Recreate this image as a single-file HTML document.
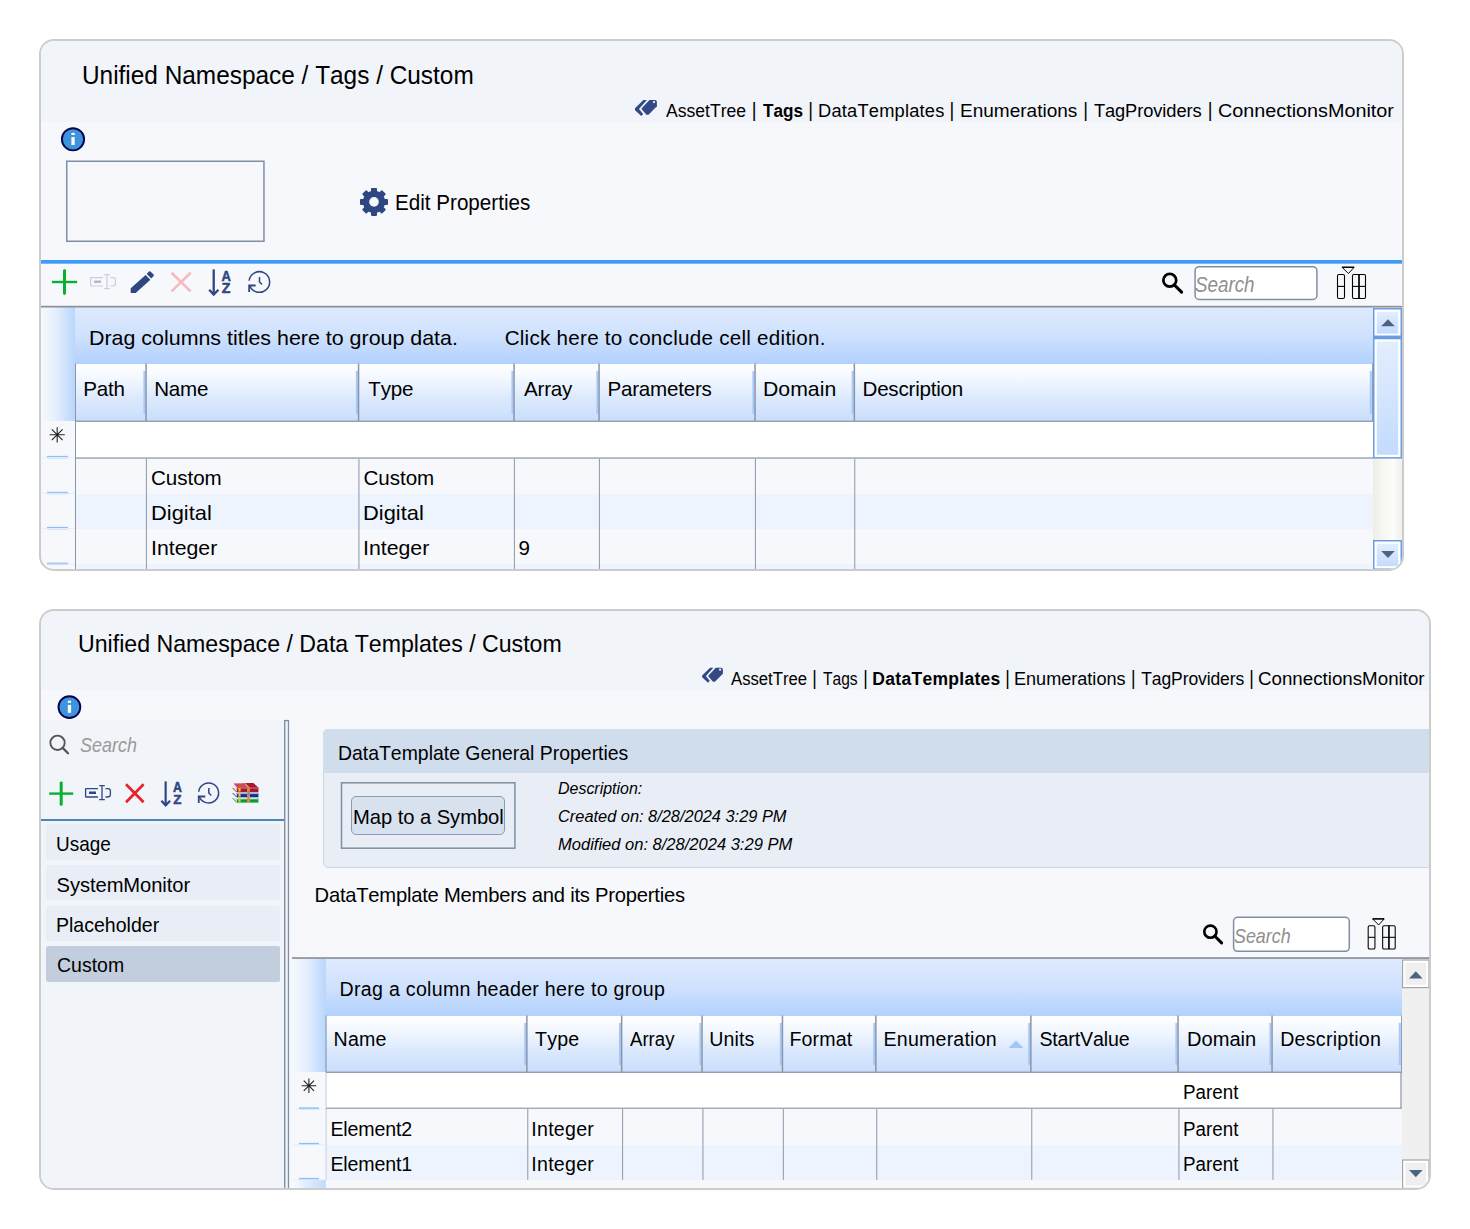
<!DOCTYPE html>
<html lang="en"><head><meta charset="utf-8"><title>Unified Namespace</title>
<style>
html,body{margin:0;padding:0;background:#fff}
body{width:1470px;height:1229px;position:relative;overflow:hidden;font-family:"Liberation Sans",sans-serif;font-kerning:none;color:#000}
.panel{position:absolute;border:2px solid #ccc;border-radius:15px;overflow:hidden;box-sizing:border-box;background:#f7f8fc}
.in{position:absolute;width:1470px;height:1229px}
.in div,.in svg,.t{position:absolute}
.t{white-space:nowrap;line-height:1}
</style></head>
<body>
<section class="panel" style="left:39px;top:39px;width:1365px;height:532px" aria-label="Unified Namespace Tags"><div class="in" style="left:-41px;top:-41px">
<div style="left:41px;top:41px;width:1361px;height:81px;background:#f1f4f9"></div>
<div style="left:41px;top:260px;width:1361px;height:4px;background:linear-gradient(#3f9bf7 0,#3f9bf7 78%,#b9d8fb 100%)"></div>
<div style="left:41px;top:307px;width:34px;height:114px;background:linear-gradient(90deg,#f6f9fe 0,#e4eefd 45%,#b9d6fd 100%)"></div>
<div style="left:75px;top:307px;width:1298px;height:57px;background:linear-gradient(#deeafd 0,#cfe1fd 50%,#b2d1fd 100%)"></div>
<div style="left:75px;top:364px;width:1298px;height:57px;background:linear-gradient(#ffffff 0,#f3f8ff 25%,#dce9fd 60%,#c9defc 100%)"></div>
<div style="left:76px;top:422px;width:1297px;height:36px;background:#fff"></div>
<div style="left:76px;top:459px;width:1297px;height:35px;background:#f7f8fc"></div>
<div style="left:76px;top:494px;width:1297px;height:35px;background:#eef4fd"></div>
<div style="left:76px;top:529px;width:1297px;height:35px;background:#f7f8fc"></div>
<div style="left:76px;top:564px;width:1297px;height:6px;background:#eef4fd"></div>
<div style="left:1373px;top:307px;width:29px;height:263px;background:linear-gradient(90deg,#eeeee8 0,#f7f7f3 35%,#fcfcfa 70%,#f0efe9 100%)"></div>
<svg width="1470" height="1229" viewBox="0 0 1470 1229" style="left:0;top:0">
<defs><linearGradient id="sbg" x1="0" y1="0" x2="0" y2="1"><stop offset="0" stop-color="#e3eefe"/><stop offset="1" stop-color="#c3dbfd"/></linearGradient></defs>
<g transform="translate(630,94) scale(1.0)" fill="#324985"><path d="M13.4 6.1 L16.9 6.1 L9.0 14.9 L13.1 19.9 L11.3 22 L5 16.2 L5 14.3 Z"/><path d="M19.4 6.1 L25.0 6.1 Q26.9 6.1 26.9 8 L26.9 12.3 L18.5 20.8 L16.4 20.8 L11.3 14.8 Z"/><circle cx="24.0" cy="8.1" r="1.15" fill="#f1f4f9"/></g>
<circle cx="73" cy="139.3" r="11.1" fill="#3d93dc" stroke="#05054c" stroke-width="1.9"/><rect x="71.4" y="132.9" width="3.3" height="2.1" fill="#fff"/><rect x="71.4" y="137.10000000000002" width="3.3" height="7.9" fill="#fff"/>
<rect x="66.75" y="161.25" width="197.2" height="80" fill="none" stroke="#7f8fa3" stroke-width="1.5"/>
<g transform="translate(374,201.9)" fill="#2f4781"><rect x="-3.0" y="-14" width="6.0" height="28" rx="0.8" transform="rotate(0)"/><rect x="-3.0" y="-14" width="6.0" height="28" rx="0.8" transform="rotate(45)"/><rect x="-3.0" y="-14" width="6.0" height="28" rx="0.8" transform="rotate(90)"/><rect x="-3.0" y="-14" width="6.0" height="28" rx="0.8" transform="rotate(135)"/><circle r="11.1"/></g><circle cx="374" cy="201.9" r="4.8" fill="#f7f8fc"/>
<path d="M63.0 270 L64.5 269 L66.0 270 L66.0 294 L64.5 295 L63.0 294 Z" fill="#09b030"/><rect x="51.9" y="280.8" width="25.2" height="2.4" fill="#09b030"/>
<g transform="translate(90,274)" fill="none" stroke="#c6cee0" stroke-width="1.2"><path d="M13 3.6 L1.2 3.6 Q0.6 3.6 0.6 4.2 L0.6 11.4 Q0.6 12 1.2 12 L13 12"/><path d="M20.5 3.6 L23 3.6 Q25.4 3.6 25.4 6 L25.4 9.6 Q25.4 12 23 12 L20.5 12"/><path d="M14.2 0.6 L19.8 0.6 M17 0.6 L17 14.6 M14.2 14.6 L19.8 14.6"/><rect x="4" y="6.5" width="7" height="2.5" fill="#aeb9d2" stroke="none"/></g>
<g transform="translate(130.8,270.8)" fill="#2f4781"><path d="M-0.1 22.3 L-0.1 17.4 L14.8 4.2 L19.6 8.9 L4.9 22.3 Z"/><path d="M15.9 3.2 L18.0 0.8 Q18.8 0.0 19.7 0.8 L22.8 3.6 Q23.5 4.3 22.8 5.1 L20.5 7.6 Z"/></g>
<path d="M171.6 272.8 L190.6 291.40000000000003 M190.6 272.8 L171.6 291.40000000000003" stroke="#f5b9bf" stroke-width="2.6" fill="none"/>
<g transform="translate(208.6,269.4) scale(1.0)"><path d="M5.1 0 L5.1 25" stroke="#2f4781" stroke-width="2.3" fill="none"/><path d="M0.6 20.3 L5.1 25.2 L9.8 20.3" stroke="#2f4781" stroke-width="2.3" fill="none" stroke-linejoin="miter"/><text x="12.9" y="11.3" font-family="Liberation Sans,sans-serif" font-weight="700" font-size="14.6" fill="#2f4781" stroke="#2f4781" stroke-width="0.5" textLength="9.4" lengthAdjust="spacingAndGlyphs">A</text><text x="13.2" y="23.9" font-family="Liberation Sans,sans-serif" font-weight="700" font-size="14.2" fill="#2f4781" stroke="#2f4781" stroke-width="0.5">Z</text></g>
<g fill="none" stroke="#2f4781" stroke-width="1.5"><path d="M249.08 280.74 A10.3 10.3 0 1 1 249.56 285.35"/><path d="M255.65 285.50 L249.15 285.50 L249.15 291.90" stroke-width="1.8"/><path d="M259.50 277.10 L259.50 282.00 L262.00 284.50"/></g>
<circle cx="1169.78" cy="280.28" r="6.43" fill="none" stroke="#000" stroke-width="2.7"/><path d="M1174.32 284.82 L1181.60 292.10" stroke="#000" stroke-width="3.1" stroke-linecap="round"/>
<rect x="1195.1" y="266.7" width="121.8" height="32.7" rx="4" fill="#fff" stroke="#7f8fa3" stroke-width="1.5"/>
<g transform="translate(1337,267) scale(1.0)" fill="none" stroke="#000" stroke-width="1.1"><path d="M5.2 0.4 L17 0.4 L11.4 6.6 Z" stroke-width="1"/><path d="M5 0.2 L17.2 0.2" stroke-width="1.3"/><rect x="0.5" y="7.5" width="7" height="24" rx="1.4"/><path d="M0.5 19.4 L7.5 19.4"/><rect x="15.5" y="7.5" width="13" height="24" rx="1.4"/><path d="M15.5 19.4 L28.5 19.4"/><path d="M22 7.5 L22 31.5" stroke-width="1.7"/></g>
<rect x="41" y="305.8" width="1361" height="1.7" fill="#8a9098"/>
<rect x="143.4" y="371" width="2" height="43" fill="#a6c8fa"/><rect x="145.3" y="363.5" width="1.5" height="57.5" fill="#8a96a8"/><rect x="355.9" y="371" width="2" height="43" fill="#a6c8fa"/><rect x="357.8" y="363.5" width="1.5" height="57.5" fill="#8a96a8"/><rect x="511.4" y="371" width="2" height="43" fill="#a6c8fa"/><rect x="513.3" y="363.5" width="1.5" height="57.5" fill="#8a96a8"/><rect x="596.4" y="371" width="2" height="43" fill="#a6c8fa"/><rect x="598.3" y="363.5" width="1.5" height="57.5" fill="#8a96a8"/><rect x="752.4" y="371" width="2" height="43" fill="#a6c8fa"/><rect x="754.3" y="363.5" width="1.5" height="57.5" fill="#8a96a8"/><rect x="851.7" y="371" width="2" height="43" fill="#a6c8fa"/><rect x="853.6" y="363.5" width="1.5" height="57.5" fill="#8a96a8"/><rect x="1369.8" y="371" width="2" height="43" fill="#a6c8fa"/><rect x="1372.0" y="363.5" width="0.9" height="57.5" fill="#8a96a8"/>
<rect x="75" y="363.5" width="1" height="207" fill="#8a96a8"/>
<rect x="75" y="420.6" width="1298" height="1.3" fill="#8a96a8"/>
<rect x="75" y="457.4" width="1298" height="1.3" fill="#8f9aab"/>
<rect x="145.9" y="458.8" width="1.1" height="112" fill="#95a0b1"/>
<rect x="358.4" y="458.8" width="1.1" height="112" fill="#95a0b1"/>
<rect x="513.9" y="458.8" width="1.1" height="112" fill="#95a0b1"/>
<rect x="598.9" y="458.8" width="1.1" height="112" fill="#95a0b1"/>
<rect x="754.9" y="458.8" width="1.1" height="112" fill="#95a0b1"/>
<rect x="854.2" y="458.8" width="1.1" height="112" fill="#95a0b1"/>
<rect x="47" y="455.9" width="21" height="2.4" fill="#8cbdfe"/><rect x="42" y="457.0" width="33" height="1" fill="#e6edf8"/>
<rect x="47" y="491.8" width="21" height="2.4" fill="#8cbdfe"/><rect x="42" y="492.90000000000003" width="33" height="1" fill="#e6edf8"/>
<rect x="47" y="526.9" width="21" height="2.4" fill="#8cbdfe"/><rect x="42" y="528.0" width="33" height="1" fill="#e6edf8"/>
<rect x="47" y="562.6" width="21" height="2.4" fill="#8cbdfe"/><rect x="42" y="563.7" width="33" height="1" fill="#e6edf8"/>
<path d="M49.60 434.80 L64.80 434.80 M51.83 429.43 L62.57 440.17 M57.20 427.20 L57.20 442.40 M62.57 429.43 L51.83 440.17 " stroke="#222" stroke-width="1.1" fill="none"/>
<rect x="1373.75" y="308.75" width="27.5" height="27.9" fill="#fff" stroke="#6c9ce0" stroke-width="1.5"/><rect x="1376.8" y="311.8" width="21.4" height="21.799999999999997" fill="url(#sbg)"/>
<path d="M1381.2 326.2 L1388 319.2 L1394.8 326.2 Z" fill="#4b6482"/>
<rect x="1373.75" y="338.35" width="27.5" height="119.5" fill="#fff" stroke="#6c9ce0" stroke-width="1.5"/><rect x="1376.8" y="341.40000000000003" width="21.4" height="113.4" fill="url(#sbg)"/>
<rect x="1373" y="335.6" width="29" height="3.6" fill="#6c9ce0"/>
<rect x="1373.75" y="540.75" width="27.5" height="28.5" fill="#fff" stroke="#6c9ce0" stroke-width="1.5"/><rect x="1376.8" y="543.8" width="21.4" height="22.4" fill="url(#sbg)"/>
<path d="M1381.2 551 L1394.8 551 L1388 558 Z" fill="#4b6482"/>
</svg>
<span class="t" style="left:82.32px;top:63px;font-size:25.7px;letter-spacing:0.000px;transform:scaleX(0.9494);transform-origin:0 0;">Unified Namespace / Tags / Custom</span>
<span class="t" style="left:666.07px;top:102px;font-size:18.3px;letter-spacing:0.000px;transform:scaleX(0.9607);transform-origin:0 0;">AssetTree</span>
<span class="t" style="left:762.81px;top:102px;font-size:18.3px;letter-spacing:0.000px;font-weight:700;transform:scaleX(0.9388);transform-origin:0 0;">Tags</span>
<span class="t" style="left:818.10px;top:102px;font-size:18.3px;letter-spacing:0.190px;">DataTemplates</span>
<span class="t" style="left:959.84px;top:102px;font-size:18.3px;letter-spacing:0.000px;transform:scaleX(1.0402);transform-origin:0 0;">Enumerations</span>
<span class="t" style="left:1093.89px;top:102px;font-size:18.3px;letter-spacing:-0.087px;">TagProviders</span>
<span class="t" style="left:1217.69px;top:102px;font-size:18.3px;letter-spacing:0.000px;transform:scaleX(1.0816);transform-origin:0 0;">ConnectionsMonitor</span>
<span class="t" style="left:751.66px;top:102px;font-size:18.3px;letter-spacing:0.000px;transform:translateY(-0.2px) scaleY(1.13);transform-origin:50% 56%;">|</span>
<span class="t" style="left:808.36px;top:102px;font-size:18.3px;letter-spacing:0.000px;transform:translateY(-0.2px) scaleY(1.13);transform-origin:50% 56%;">|</span>
<span class="t" style="left:949.46px;top:102px;font-size:18.3px;letter-spacing:0.000px;transform:translateY(-0.2px) scaleY(1.13);transform-origin:50% 56%;">|</span>
<span class="t" style="left:1083.16px;top:102px;font-size:18.3px;letter-spacing:0.000px;transform:translateY(-0.2px) scaleY(1.13);transform-origin:50% 56%;">|</span>
<span class="t" style="left:1207.66px;top:102px;font-size:18.3px;letter-spacing:0.000px;transform:translateY(-0.2px) scaleY(1.13);transform-origin:50% 56%;">|</span>
<span class="t" style="left:395.31px;top:193px;font-size:21.4px;letter-spacing:0.000px;transform:scaleX(0.9643);transform-origin:0 0;">Edit Properties</span>
<span class="t" style="left:1195.27px;top:275px;font-size:21.4px;letter-spacing:0.000px;font-style:italic;color:#8f8f8f;transform:scaleX(0.8789);transform-origin:0 0;">Search</span>
<span class="t" style="left:89.44px;top:328px;font-size:20.6px;letter-spacing:0.000px;transform:scaleX(1.0396);transform-origin:0 0;">Drag columns titles here to group data.</span>
<span class="t" style="left:504.65px;top:328px;font-size:20.6px;letter-spacing:0.268px;">Click here to conclude cell edition.</span>
<span class="t" style="left:607.51px;top:379px;font-size:20.6px;letter-spacing:-0.226px;">Parameters</span>
<span class="t" style="left:763.46px;top:379px;font-size:20.6px;letter-spacing:0.000px;transform:scaleX(1.0316);transform-origin:0 0;">Domain</span>
<span class="t" style="left:83.21px;top:379px;font-size:20.6px;letter-spacing:-0.226px;">Path</span>
<span class="t" style="left:154.21px;top:379px;font-size:20.6px;letter-spacing:-0.226px;">Name</span>
<span class="t" style="left:368.34px;top:379px;font-size:20.6px;letter-spacing:-0.226px;">Type</span>
<span class="t" style="left:524.06px;top:379px;font-size:20.6px;letter-spacing:-0.226px;">Array</span>
<span class="t" style="left:862.51px;top:379px;font-size:20.6px;letter-spacing:-0.226px;">Description</span>
<span class="t" style="left:150.73px;top:538px;font-size:20.6px;letter-spacing:0.000px;transform:scaleX(1.0341);transform-origin:0 0;">Integer</span>
<span class="t" style="left:150.95px;top:468px;font-size:20.6px;letter-spacing:-0.034px;">Custom</span>
<span class="t" style="left:150.61px;top:503px;font-size:20.6px;letter-spacing:0.000px;transform:scaleX(1.0614);transform-origin:0 0;">Digital</span>
<span class="t" style="left:363.45px;top:468px;font-size:20.6px;letter-spacing:-0.034px;">Custom</span>
<span class="t" style="left:363.11px;top:503px;font-size:20.6px;letter-spacing:0.000px;transform:scaleX(1.0614);transform-origin:0 0;">Digital</span>
<span class="t" style="left:363.23px;top:538px;font-size:20.6px;letter-spacing:0.000px;transform:scaleX(1.0341);transform-origin:0 0;">Integer</span>
<span class="t" style="left:518.43px;top:538px;font-size:20.6px;letter-spacing:0.000px;">9</span>
</div></section>
<section class="panel" style="left:39px;top:609px;width:1392px;height:581px" aria-label="Unified Namespace Data Templates"><div class="in" style="left:-41px;top:-611px">
<div style="left:41px;top:611px;width:1388px;height:79px;background:#f1f4f9"></div>
<div style="left:41px;top:720px;width:243px;height:470px;background:#f1f4f9"></div>
<div style="left:284px;top:720px;width:5px;height:470px;background:#f4f6fb"></div>
<div style="left:41px;top:819px;width:243px;height:2px;background:#4a86b8"></div>
<div style="left:46px;top:824px;width:234px;height:36px;background:#e9eef6;border-radius:2px"></div>
<div style="left:46px;top:865px;width:234px;height:35px;background:#e9eef6;border-radius:2px"></div>
<div style="left:46px;top:906px;width:234px;height:35px;background:#e9eef6;border-radius:2px"></div>
<div style="left:46px;top:946px;width:234px;height:36px;background:#c2cddd;border-radius:2px"></div>
<div style="left:323px;top:729px;width:1110px;height:139px;background:#e9eef6;border:1px solid #c9d6e6;border-radius:5px;box-sizing:border-box"></div>
<div style="left:323px;top:729px;width:1110px;height:44px;background:#cfdded;border-radius:5px 0 0 0"></div>
<div style="left:351px;top:796px;width:154px;height:39px;background:#d8e1ee;border:1px solid #8a9bb2;border-radius:5px;box-sizing:border-box"></div>
<div style="left:292px;top:959px;width:34px;height:113px;background:linear-gradient(90deg,#f6f9fe 0,#e4eefd 45%,#b9d6fd 100%)"></div>
<div style="left:326px;top:959px;width:1076px;height:57px;background:linear-gradient(#deeafd 0,#cfe1fd 50%,#b2d1fd 100%)"></div>
<div style="left:326px;top:1016px;width:1076px;height:56px;background:linear-gradient(#ffffff 0,#f3f8ff 25%,#dce9fd 60%,#c9defc 100%)"></div>
<div style="left:327px;top:1073px;width:1074px;height:35px;background:#fff"></div>
<div style="left:327px;top:1145px;width:1075px;height:35px;background:#eef4fd"></div>
<div style="left:292px;top:1180px;width:34px;height:10px;background:linear-gradient(90deg,#fbfcff 0,#dbe8fd 55%,#c3dbfc 100%)"></div>
<div style="left:1402px;top:959px;width:27px;height:231px;background:#f0f0f0"></div>
<svg width="1470" height="1229" viewBox="0 0 1470 1229" style="left:0;top:0">
<g transform="translate(697.4,662.0) scale(0.946)" fill="#324985"><path d="M13.4 6.1 L16.9 6.1 L9.0 14.9 L13.1 19.9 L11.3 22 L5 16.2 L5 14.3 Z"/><path d="M19.4 6.1 L25.0 6.1 Q26.9 6.1 26.9 8 L26.9 12.3 L18.5 20.8 L16.4 20.8 L11.3 14.8 Z"/><circle cx="24.0" cy="8.1" r="1.15" fill="#f1f4f9"/></g>
<circle cx="69.4" cy="707.1" r="10.9" fill="#3d93dc" stroke="#05054c" stroke-width="1.9"/><rect x="67.80000000000001" y="700.7" width="3.3" height="2.1" fill="#fff"/><rect x="67.80000000000001" y="704.9" width="3.3" height="7.9" fill="#fff"/>
<rect x="284.1" y="720" width="1.3" height="470" fill="#76879c"/><rect x="287.8" y="720" width="1.3" height="470" fill="#7f90a5"/><rect x="284.1" y="719.9" width="5" height="1.4" fill="#7f90a5"/>
<circle cx="57.53" cy="742.83" r="7.18" fill="none" stroke="#555" stroke-width="1.9"/><path d="M62.60 747.90 L68.00 753.30" stroke="#555" stroke-width="2.3" stroke-linecap="round"/>
<path d="M59.7 782.2 L61.2 781.2 L62.7 782.2 L62.7 805.0 L61.2 806.0 L59.7 805.0 Z" fill="#09b030"/><rect x="49.2" y="792.4" width="24" height="2.4" fill="#09b030"/>
<g transform="translate(85,785)" fill="none" stroke="#2f4781" stroke-width="1.3"><path d="M13 3.6 L1.2 3.6 Q0.6 3.6 0.6 4.2 L0.6 11.4 Q0.6 12 1.2 12 L13 12"/><path d="M20.5 3.6 L23 3.6 Q25.4 3.6 25.4 6 L25.4 9.6 Q25.4 12 23 12 L20.5 12"/><path d="M14.2 0.6 L19.8 0.6 M17 0.6 L17 14.6 M14.2 14.6 L19.8 14.6"/><rect x="4" y="6.5" width="7" height="2.5" fill="#2f4781" stroke="none"/></g>
<path d="M126 784.2 L143.6 802.2 M143.6 784.2 L126 802.2" stroke="#e8212b" stroke-width="2.7" fill="none"/>
<g transform="translate(160.8,781.4) scale(0.95)"><path d="M5.1 0 L5.1 25" stroke="#2f4781" stroke-width="2.3" fill="none"/><path d="M0.6 20.3 L5.1 25.2 L9.8 20.3" stroke="#2f4781" stroke-width="2.3" fill="none" stroke-linejoin="miter"/><text x="12.9" y="11.3" font-family="Liberation Sans,sans-serif" font-weight="700" font-size="14.6" fill="#2f4781" stroke="#2f4781" stroke-width="0.5" textLength="9.4" lengthAdjust="spacingAndGlyphs">A</text><text x="13.2" y="23.9" font-family="Liberation Sans,sans-serif" font-weight="700" font-size="14.2" fill="#2f4781" stroke="#2f4781" stroke-width="0.5">Z</text></g>
<g fill="none" stroke="#2f4781" stroke-width="1.5"><path d="M198.67 791.78 A10.0 10.0 0 1 1 199.14 796.26"/><path d="M205.25 796.50 L198.75 796.50 L198.75 802.90" stroke-width="1.8"/><path d="M208.80 788.10 L208.80 793.00 L211.30 795.50"/></g>
<g transform="translate(232.2,782.8)"><path d="M1.2 0.6 L21 0.2 L26 4.6 L4.6 4.8 Z" fill="#cf4a5a"/><path d="M11 0.4 L21 0.2 L26 4.6 L15 4.7 Z" fill="#a51a2c"/><path d="M1.2 0.6 L4.6 4.8 L4.6 9.4 L0.4 5.2 Z" fill="#e8e8ea"/><rect x="4.6" y="4.7" width="21.6" height="4.6" fill="#a51a2c"/><rect x="4.6" y="4.7" width="21.6" height="1.3" fill="#cc5060"/><path d="M0.4 10 L4.6 14.2 L4.6 10 Z" fill="#e8e8ea"/><rect x="4.6" y="10" width="21.6" height="4.5" fill="#16318c"/><rect x="4.6" y="10" width="21.6" height="1.3" fill="#9db4e8"/><path d="M0.4 15.2 L4.6 19.6 L4.6 15.2 Z" fill="#e8e8ea"/><rect x="4.6" y="15.2" width="21.6" height="4.6" fill="#0a9a3a"/><rect x="4.6" y="15.2" width="21.6" height="1.3" fill="#c8ecc8"/><rect x="6.2" y="5.2" width="2.2" height="3.6" fill="#f2c21a"/><rect x="6.2" y="10.6" width="2.2" height="3.4" fill="#f2c21a"/><rect x="6.2" y="15.8" width="2.2" height="3.4" fill="#f2c21a"/><path d="M0.4 5.2 L4.6 9.4" stroke="#a51a2c" stroke-width="0.9"/><path d="M0.4 10.2 L4.6 14.4" stroke="#16318c" stroke-width="0.9"/><path d="M0.4 15.4 L4.6 19.7" stroke="#0a9a3a" stroke-width="0.9"/><path d="M11.5 0.4 L13.2 0.4 L17.6 4.7 L15.2 4.7 Z" fill="#e0a070"/><rect x="14.9" y="4.7" width="2.8" height="15.1" fill="#dd8a5a"/><rect x="15.7" y="8" width="1.2" height="5" fill="#8a8a90"/></g>
<rect x="341.5" y="782.8" width="173.4" height="65.4" fill="none" stroke="#7f8fa3" stroke-width="1.5"/>
<circle cx="1210.41" cy="931.71" r="6.11" fill="none" stroke="#000" stroke-width="2.6"/><path d="M1214.73 936.03 L1221.60 942.90" stroke="#000" stroke-width="3.0" stroke-linecap="round"/>
<rect x="1233.6" y="917.3" width="115.7" height="34" rx="4" fill="#fff" stroke="#7f8fa3" stroke-width="1.5"/>
<g transform="translate(1367.7,918.6) scale(0.965)" fill="none" stroke="#000" stroke-width="1.1"><path d="M5.2 0.4 L17 0.4 L11.4 6.6 Z" stroke-width="1"/><path d="M5 0.2 L17.2 0.2" stroke-width="1.3"/><rect x="0.5" y="7.5" width="7" height="24" rx="1.4"/><path d="M0.5 19.4 L7.5 19.4"/><rect x="15.5" y="7.5" width="13" height="24" rx="1.4"/><path d="M15.5 19.4 L28.5 19.4"/><path d="M22 7.5 L22 31.5" stroke-width="1.7"/></g>
<rect x="292" y="957.2" width="1137" height="1.7" fill="#8a9098"/>
<rect x="524.2" y="1023" width="2" height="42" fill="#a6c8fa"/><rect x="526.1" y="1015.5" width="1.5" height="56.5" fill="#8a96a8"/><rect x="619.0" y="1023" width="2" height="42" fill="#a6c8fa"/><rect x="620.9" y="1015.5" width="1.5" height="56.5" fill="#8a96a8"/><rect x="699.4" y="1023" width="2" height="42" fill="#a6c8fa"/><rect x="701.3" y="1015.5" width="1.5" height="56.5" fill="#8a96a8"/><rect x="779.8" y="1023" width="2" height="42" fill="#a6c8fa"/><rect x="781.7" y="1015.5" width="1.5" height="56.5" fill="#8a96a8"/><rect x="873.2" y="1023" width="2" height="42" fill="#a6c8fa"/><rect x="875.1" y="1015.5" width="1.5" height="56.5" fill="#8a96a8"/><rect x="1028.2" y="1023" width="2" height="42" fill="#a6c8fa"/><rect x="1030.1" y="1015.5" width="1.5" height="56.5" fill="#8a96a8"/><rect x="1175.4" y="1023" width="2" height="42" fill="#a6c8fa"/><rect x="1177.3" y="1015.5" width="1.5" height="56.5" fill="#8a96a8"/><rect x="1269.4" y="1023" width="2" height="42" fill="#a6c8fa"/><rect x="1271.3" y="1015.5" width="1.5" height="56.5" fill="#8a96a8"/><rect x="1398.8" y="1023" width="2" height="42" fill="#a6c8fa"/><rect x="1401.0" y="1015.5" width="0.9" height="56.5" fill="#8a96a8"/>
<rect x="325.5" y="1015.5" width="1.1" height="57" fill="#8a96a8"/><rect x="325.5" y="1072" width="1.2" height="108" fill="#cdd6e2"/>
<rect x="326" y="1071.6" width="1076" height="1.3" fill="#8a96a8"/>
<rect x="326" y="1107.6" width="1076" height="1.3" fill="#98a2b2"/>
<rect x="1400.4" y="1072" width="1.2" height="36" fill="#8a96a8"/>
<rect x="527.2" y="1108.8" width="1.1" height="71" fill="#95a0b1"/>
<rect x="622.0" y="1108.8" width="1.1" height="71" fill="#95a0b1"/>
<rect x="702.4" y="1108.8" width="1.1" height="71" fill="#95a0b1"/>
<rect x="782.8" y="1108.8" width="1.1" height="71" fill="#95a0b1"/>
<rect x="876.2" y="1108.8" width="1.1" height="71" fill="#95a0b1"/>
<rect x="1031.2" y="1108.8" width="1.1" height="71" fill="#95a0b1"/>
<rect x="1178.4" y="1108.8" width="1.1" height="71" fill="#95a0b1"/>
<rect x="1272.4" y="1108.8" width="1.1" height="71" fill="#95a0b1"/>
<rect x="299" y="1107.3999999999999" width="20" height="2.0" fill="#8cbdfe"/><rect x="293" y="1108.8" width="32" height="0.8" fill="#e6edf8"/>
<rect x="299" y="1142.8999999999999" width="20" height="2.0" fill="#8cbdfe"/><rect x="293" y="1144.3" width="32" height="0.8" fill="#e6edf8"/>
<rect x="299" y="1177.8999999999999" width="20" height="2.0" fill="#8cbdfe"/><rect x="293" y="1179.3" width="32" height="0.8" fill="#e6edf8"/>
<path d="M301.60 1085.70 L316.20 1085.70 M303.74 1080.54 L314.06 1090.86 M308.90 1078.40 L308.90 1093.00 M314.06 1080.54 L303.74 1090.86 " stroke="#222" stroke-width="1.1" fill="none"/>
<path d="M1008.6 1048 L1016 1040.6 L1023.4 1048 Z" fill="#a3c6f8"/>
<rect x="1402.6" y="960.0" width="26.400000000000002" height="27.6" fill="#fff" stroke="#a6a6a6" stroke-width="1.2"/><rect x="1405.4" y="962.8" width="20.8" height="22.0" fill="#efefef"/>
<path d="M1409 978.4 L1415.8 971.2 L1422.6 978.4 Z" fill="#4b6482"/>
<rect x="1402.6" y="1160.0" width="26.400000000000002" height="28.400000000000002" fill="#fff" stroke="#a6a6a6" stroke-width="1.2"/><rect x="1405.4" y="1162.8000000000002" width="20.8" height="22.8" fill="#efefef"/>
<path d="M1409 1170 L1422.6 1170 L1415.8 1177.2 Z" fill="#4b6482"/>
</svg>
<span class="t" style="left:78.21px;top:632px;font-size:24.6px;letter-spacing:0.000px;transform:scaleX(0.9413);transform-origin:0 0;">Unified Namespace / Data Templates / Custom</span>
<span class="t" style="left:731.27px;top:671px;font-size:17.5px;letter-spacing:0.000px;transform:scaleX(0.9539);transform-origin:0 0;">AssetTree</span>
<span class="t" style="left:822.55px;top:671px;font-size:17.5px;letter-spacing:0.000px;transform:scaleX(0.8897);transform-origin:0 0;">Tags</span>
<span class="t" style="left:872.33px;top:671px;font-size:17.5px;letter-spacing:0.291px;font-weight:700;">DataTemplates</span>
<span class="t" style="left:1014.42px;top:671px;font-size:17.5px;letter-spacing:0.000px;transform:scaleX(1.0330);transform-origin:0 0;">Enumerations</span>
<span class="t" style="left:1141.21px;top:671px;font-size:17.5px;letter-spacing:-0.095px;">TagProviders</span>
<span class="t" style="left:1258.35px;top:671px;font-size:17.5px;letter-spacing:0.000px;transform:scaleX(1.0702);transform-origin:0 0;">ConnectionsMonitor</span>
<span class="t" style="left:812.34px;top:671px;font-size:17.5px;letter-spacing:0.000px;transform:translateY(-0.2px) scaleY(1.12);transform-origin:50% 56%;">|</span>
<span class="t" style="left:863.14px;top:671px;font-size:17.5px;letter-spacing:0.000px;transform:translateY(-0.2px) scaleY(1.12);transform-origin:50% 56%;">|</span>
<span class="t" style="left:1005.24px;top:671px;font-size:17.5px;letter-spacing:0.000px;transform:translateY(-0.2px) scaleY(1.12);transform-origin:50% 56%;">|</span>
<span class="t" style="left:1130.94px;top:671px;font-size:17.5px;letter-spacing:0.000px;transform:translateY(-0.2px) scaleY(1.12);transform-origin:50% 56%;">|</span>
<span class="t" style="left:1249.14px;top:671px;font-size:17.5px;letter-spacing:0.000px;transform:translateY(-0.2px) scaleY(1.12);transform-origin:50% 56%;">|</span>
<span class="t" style="left:80.49px;top:735px;font-size:20.2px;letter-spacing:0.000px;font-style:italic;color:#9a9a9a;transform:scaleX(0.8895);transform-origin:0 0;">Search</span>
<span class="t" style="left:56.58px;top:875px;font-size:20.2px;letter-spacing:-0.088px;">SystemMonitor</span>
<span class="t" style="left:56.24px;top:834px;font-size:20.2px;letter-spacing:0.000px;transform:scaleX(0.9386);transform-origin:0 0;">Usage</span>
<span class="t" style="left:56.10px;top:915px;font-size:20.2px;letter-spacing:0.000px;transform:scaleX(0.9676);transform-origin:0 0;">Placeholder</span>
<span class="t" style="left:56.51px;top:955px;font-size:20.2px;letter-spacing:0.000px;transform:scaleX(0.9652);transform-origin:0 0;">Custom</span>
<span class="t" style="left:337.61px;top:743px;font-size:20.2px;letter-spacing:0.000px;transform:scaleX(0.9618);transform-origin:0 0;">DataTemplate General Properties</span>
<span class="t" style="left:353.04px;top:807px;font-size:20.2px;letter-spacing:-0.054px;">Map to a Symbol</span>
<span class="t" style="left:558.31px;top:780px;font-size:17.4px;letter-spacing:0.000px;font-style:italic;transform:scaleX(0.9180);transform-origin:0 0;">Description:</span>
<span class="t" style="left:557.90px;top:808px;font-size:17.4px;letter-spacing:0.000px;font-style:italic;transform:scaleX(0.9415);transform-origin:0 0;">Created on: 8/28/2024 3:29 PM</span>
<span class="t" style="left:558.29px;top:836px;font-size:17.4px;letter-spacing:0.000px;font-style:italic;transform:scaleX(0.9499);transform-origin:0 0;">Modified on: 8/28/2024 3:29 PM</span>
<span class="t" style="left:314.54px;top:885px;font-size:20.2px;letter-spacing:-0.229px;">DataTemplate Members and its Properties</span>
<span class="t" style="left:1233.99px;top:925px;font-size:21px;letter-spacing:0.000px;font-style:italic;color:#8f8f8f;transform:scaleX(0.8510);transform-origin:0 0;">Search</span>
<span class="t" style="left:339.59px;top:980px;font-size:19.6px;letter-spacing:0.284px;">Drag a column header here to group</span>
<span class="t" style="left:883.59px;top:1030px;font-size:19.6px;letter-spacing:0.195px;">Enumeration</span>
<span class="t" style="left:630.16px;top:1030px;font-size:19.6px;letter-spacing:0.000px;transform:scaleX(0.9497);transform-origin:0 0;">Array</span>
<span class="t" style="left:709.29px;top:1030px;font-size:19.6px;letter-spacing:0.091px;">Units</span>
<span class="t" style="left:789.39px;top:1030px;font-size:19.6px;letter-spacing:0.156px;">Format</span>
<span class="t" style="left:1039.41px;top:1030px;font-size:19.6px;letter-spacing:-0.151px;">StartValue</span>
<span class="t" style="left:1186.55px;top:1030px;font-size:19.6px;letter-spacing:0.000px;transform:scaleX(1.0254);transform-origin:0 0;">Domain</span>
<span class="t" style="left:1280.19px;top:1030px;font-size:19.6px;letter-spacing:0.264px;">Description</span>
<span class="t" style="left:333.59px;top:1030px;font-size:19.6px;letter-spacing:0.195px;">Name</span>
<span class="t" style="left:535.06px;top:1030px;font-size:19.6px;letter-spacing:0.195px;">Type</span>
<span class="t" style="left:330.39px;top:1120px;font-size:19.6px;letter-spacing:-0.144px;">Element2</span>
<span class="t" style="left:330.39px;top:1155px;font-size:19.6px;letter-spacing:-0.144px;">Element1</span>
<span class="t" style="left:531.29px;top:1120px;font-size:19.6px;letter-spacing:0.269px;">Integer</span>
<span class="t" style="left:531.29px;top:1155px;font-size:19.6px;letter-spacing:0.269px;">Integer</span>
<span class="t" style="left:1183.36px;top:1083px;font-size:19.6px;letter-spacing:0.000px;transform:scaleX(0.9590);transform-origin:0 0;">Parent</span>
<span class="t" style="left:1183.36px;top:1120px;font-size:19.6px;letter-spacing:0.000px;transform:scaleX(0.9590);transform-origin:0 0;">Parent</span>
<span class="t" style="left:1183.36px;top:1155px;font-size:19.6px;letter-spacing:0.000px;transform:scaleX(0.9590);transform-origin:0 0;">Parent</span>
</div></section>
</body></html>
